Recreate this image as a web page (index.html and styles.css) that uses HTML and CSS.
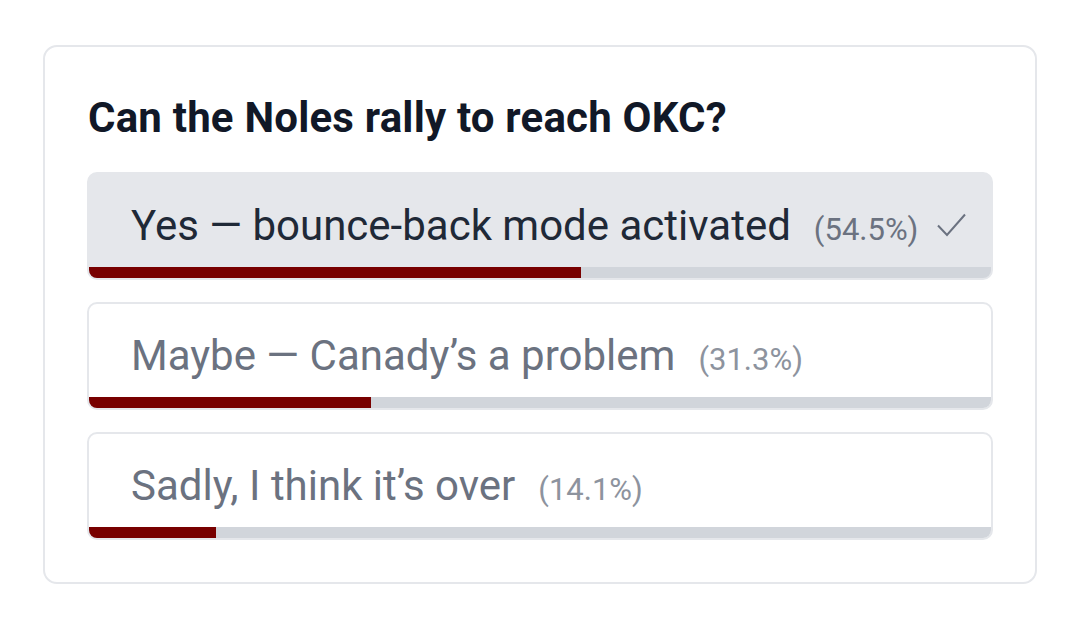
FILE: index.html
```html
<!DOCTYPE html>
<html lang="en">
<head>
<meta charset="utf-8">
<title>Poll</title>
<link rel="stylesheet" href="styles.css">
</head>
<body>
<div class="card">
  <h2 class="title">Can the Noles rally to reach OKC?</h2>
  <div class="options">
    <div class="option selected">
      <div class="label">
        <span class="text">Yes — bounce-back mode activated</span>
        <span class="pct">(54.5%)</span>
        <svg class="check" viewBox="0 0 29 24" width="29" height="24"><path d="M1 12.5 L10 22 L28 1.5" fill="none" stroke="#6b7280" stroke-width="2"/></svg>
      </div>
      <div class="bar"><div class="fill" style="width:54.5%"></div></div>
    </div>
    <div class="option">
      <div class="label">
        <span class="text">Maybe — Canady’s a problem</span>
        <span class="pct">(31.3%)</span>
      </div>
      <div class="bar"><div class="fill" style="width:31.3%"></div></div>
    </div>
    <div class="option">
      <div class="label">
        <span class="text">Sadly, I think it’s over</span>
        <span class="pct">(14.1%)</span>
      </div>
      <div class="bar"><div class="fill" style="width:14.1%"></div></div>
    </div>
  </div>
</div>
</body>
</html>
```

FILE: styles.css
```css
html, body {
  margin: 0;
  padding: 0;
  background: #ffffff;
}
body {
  font-family: Roboto, "Liberation Sans", Arial, sans-serif;
  padding: 45px 0 0 43px;
}
.card {
  box-sizing: border-box;
  width: 994px;
  border: 2px solid #e5e7eb;
  border-radius: 14px;
  padding: 42px;
  background: #fff;
}
.title {
  margin: 5px 0 30px 1px;
  font-size: 42px;
  line-height: 48px;
  font-weight: 700;
  letter-spacing: 0.2px;
  color: #111827;
}
.options {
  display: flex;
  flex-direction: column;
  gap: 22px;
}
.option {
  box-sizing: border-box;
  height: 108px;
  border: 2px solid #e5e7eb;
  border-radius: 10px;
  overflow: hidden;
  display: flex;
  flex-direction: column;
  background: #fff;
}
.option.selected {
  background: #e5e7eb;
}
.label {
  flex: 1;
  display: flex;
  align-items: baseline;
  padding: 31px 16px 0 42px;
  white-space: nowrap;
}
.text {
  font-size: 42px;
  color: #6b7280;
  line-height: 42px;
}
.selected .text {
  color: #1f2937;
}
.pct {
  font-size: 31px;
  color: #8d939e;
  margin-left: 23px;
  line-height: 42px;
}
.selected .pct {
  color: #6b7280;
}
.check {
  margin-left: 19px;
  position: relative;
  top: -3px;
}
.bar {
  height: 11px;
  background: #d1d5db;
  flex-shrink: 0;
}
.fill {
  height: 100%;
  background: #780000;
}
```
